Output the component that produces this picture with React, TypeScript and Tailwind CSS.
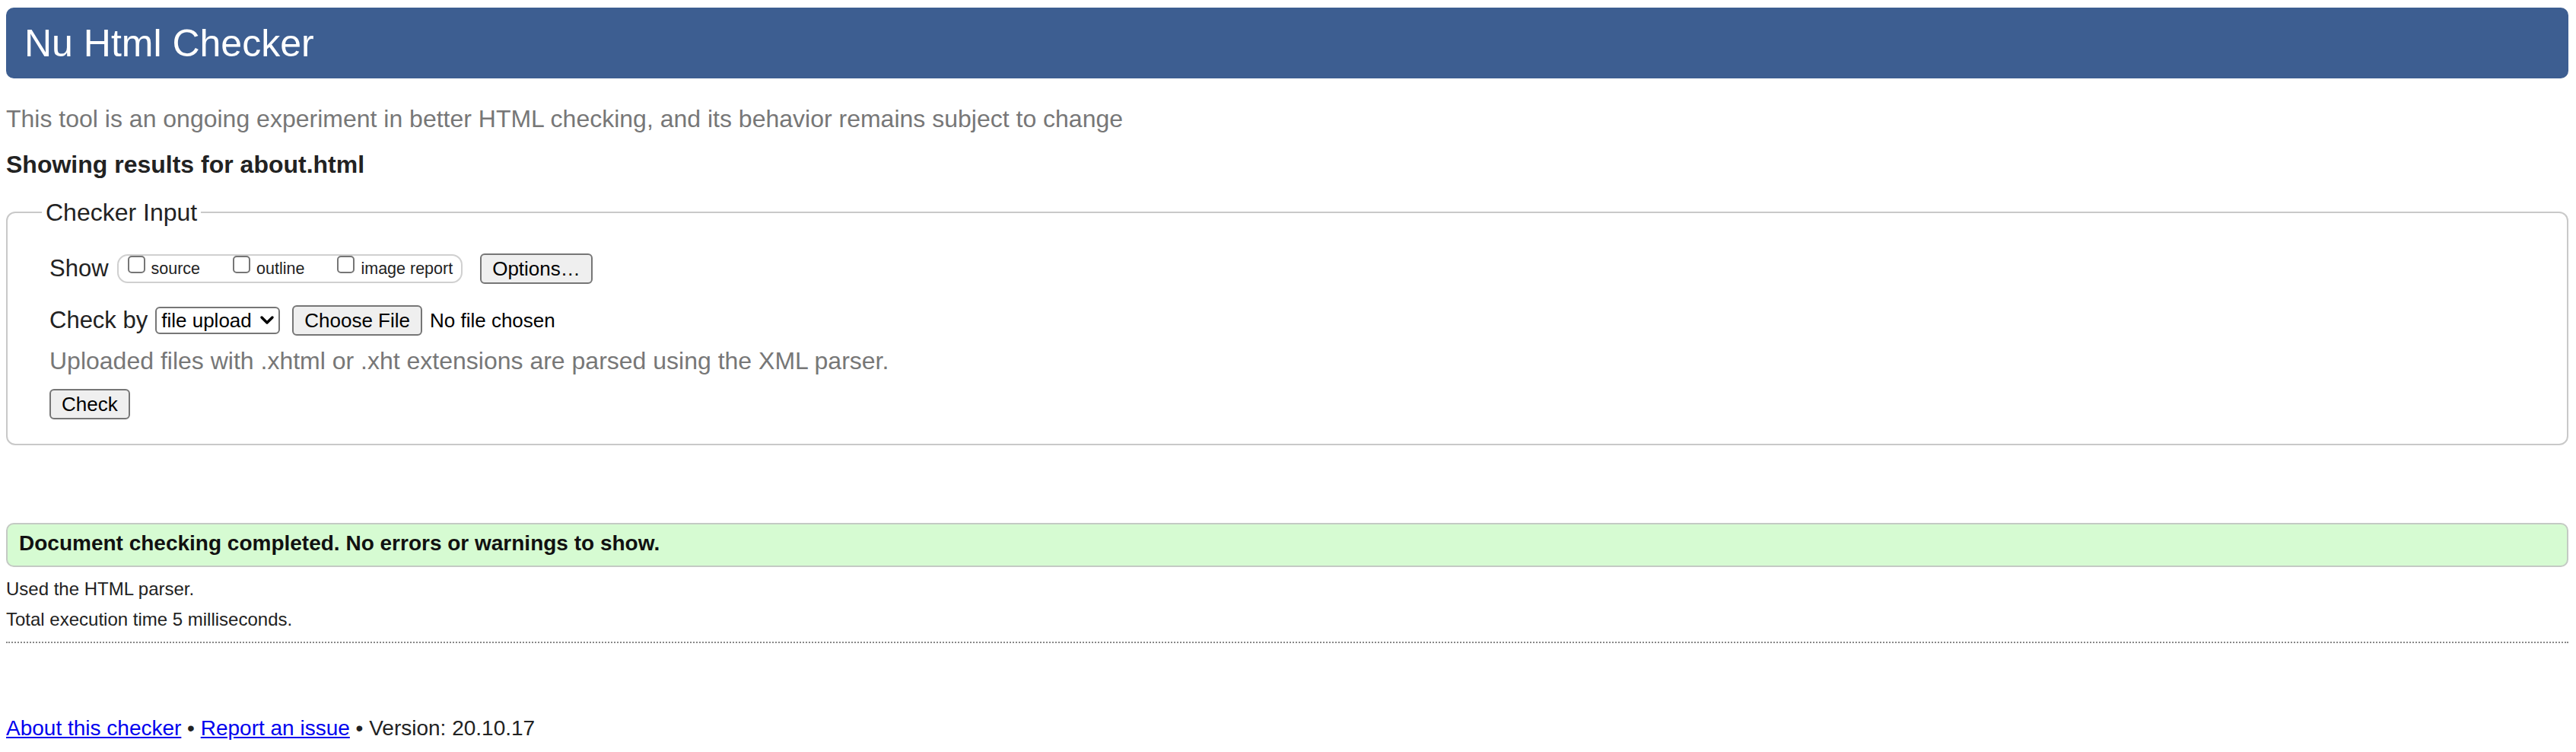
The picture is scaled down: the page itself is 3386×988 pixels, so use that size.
export default function App() {
  const opts = [
    { id: 'source', label: 'source' },
    { id: 'outline', label: 'outline' },
    { id: 'image', label: 'image report' },
  ]

  return (
    <div className="min-h-screen bg-white pl-[8px] pr-[10px] pt-[10px] font-['Liberation_Sans',Arial,sans-serif] text-[#222]">
      {/* Title bar */}
      <h1 className="flex h-[93px] items-center rounded-[10px] bg-[#3d5e91] pl-[24px] text-[50px] font-normal leading-[56px] text-white">
        Nu Html Checker
      </h1>

      <p className="mt-[33px] text-[32px] leading-[40px] text-[#777]">
        This tool is an ongoing experiment in better HTML checking, and its behavior remains subject to change
      </p>

      <h2 className="mt-[20px] text-[32px] font-bold leading-[40px] text-[#222]">
        Showing results for about.html
      </h2>

      {/* Checker input form */}
      <fieldset className="mt-[23px] rounded-[12px] border-2 border-[#c9c9c9] pb-[32px] pl-[45px]">
        <legend className="px-[5px] text-[32px] leading-[40px] text-[#222]">Checker Input</legend>

        <div className="pl-[10px]">
          <div className="mt-[34px] flex h-[40px] items-center">
            <span className="text-[31px] leading-[40px]">Show</span>
            <div className="ml-[11px] flex h-[38px] items-center rounded-[14px] border-2 border-[#d0d0d0] pl-[12px] pr-[11px]">
              {opts.map((o, i) => (
                <label key={o.id} className={`flex h-full items-center ${i > 0 ? 'ml-[43px]' : ''}`}>
                  <input
                    type="checkbox"
                    className="h-[23px] w-[23px] appearance-none self-start rounded-[5px] border-2 border-[#767676] bg-white"
                  />
                  <span className="ml-[8px] text-[21.5px] leading-[26px] text-[#222]">{o.label}</span>
                </label>
              ))}
            </div>
            <button className="ml-[23px] h-[40px] rounded-[6px] border-2 border-[#767676] bg-[#efefef] px-[14px] text-[26px] leading-[32px] text-black">
              Options…
            </button>
          </div>

          <div className="mt-[28px] flex h-[40px] items-center">
            <span className="text-[31px] leading-[40px]">Check by</span>
            <div className="relative ml-[10px] h-[36px] w-[164px]">
              <select className="h-full w-full appearance-none rounded-[6px] border-2 border-[#767676] bg-white pl-[6px] text-[26px] leading-[32px] text-black">
                <option>file upload</option>
                <option>address</option>
                <option>text input</option>
              </select>
              <svg
                className="pointer-events-none absolute right-[7px] top-[11px]"
                width="20"
                height="13"
                viewBox="0 0 20 13"
                fill="none"
              >
                <path d="M3 3 L10 10 L17 3" stroke="#000" strokeWidth="3.5" strokeLinecap="round" strokeLinejoin="round" />
              </svg>
            </div>
            <button className="ml-[16px] h-[40px] rounded-[6px] border-2 border-[#767676] bg-[#efefef] px-[14px] text-[26px] leading-[32px] text-black">
              Choose File
            </button>
            <span className="ml-[10px] text-[26px] leading-[32px] text-black">No file chosen</span>
          </div>

          <p className="mt-[13px] text-[32px] leading-[40px] text-[#777]">
            Uploaded files with .xhtml or .xht extensions are parsed using the XML parser.
          </p>

          <button className="mt-[17px] block h-[40px] rounded-[6px] border-2 border-[#767676] bg-[#efefef] px-[14px] text-[26px] leading-[32px] text-black">
            Check
          </button>
        </div>
      </fieldset>

      {/* Result */}
      <div className="mt-[102px] h-[58px] rounded-[10px] border-2 border-[#c4cac4] bg-[#d6fbd2] pl-[15px] pt-[9px] text-[28px] font-bold leading-[32px] text-[#111]">
        Document checking completed. No errors or warnings to show.
      </div>

      <p className="mt-[14px] text-[24px] leading-[30px] text-[#222]">Used the HTML parser.</p>
      <p className="mt-[10px] text-[24px] leading-[30px] text-[#222]">Total execution time 5 milliseconds.</p>
      <hr className="mt-[14px] border-0 border-t-2 border-dotted border-[#888]" />

      <p className="mt-[95px] text-[28px] leading-[34px] text-[#222]">
        <a href="#about" className="text-[#0000ee] underline">About this checker</a>
        {' • '}
        <a href="#issue" className="text-[#0000ee] underline">Report an issue</a>
        {' • Version: 20.10.17'}
      </p>
    </div>
  )
}
